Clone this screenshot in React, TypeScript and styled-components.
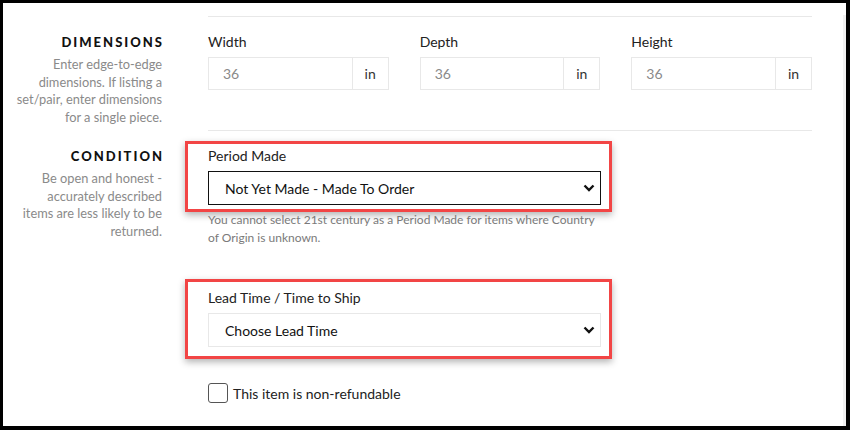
import React, { FC } from "react"
import styled, { createGlobalStyle } from "styled-components"

const GlobalStyle = createGlobalStyle`
  html, body {
    margin: 0;
    padding: 0;
    background: #000;
  }
  body {
    font-family: Lato, "Open Sans", "Liberation Sans", sans-serif;
    color: #222;
  }
`

const Frame = styled.div`
  position: relative;
  margin: 3px 4px 0 3px;
  padding-top: 13px;
  height: 423px;
  box-sizing: border-box;
  background: #fff;
  overflow: hidden;
`

const ScrollStrip = styled.div`
  position: absolute;
  right: 0;
  top: 12px;
  bottom: 0;
  width: 3px;
  background: #f0f0f0;
`

const Section = styled.section`
  display: grid;
  grid-template-columns: 147px 604px;
  column-gap: 46px;
  padding-left: 12px;
`

const Aside = styled.div`
  text-align: right;
`

const Heading = styled.h3<{ $top: number }>`
  margin: ${({ $top }) => $top}px -2px 4px 0;
  font-size: 13px;
  line-height: 20px;
  font-weight: 900;
  letter-spacing: 2px;
  color: #111;
`

const Blurb = styled.p`
  margin: 0 0 0 -8px;
  font-size: 12.8px;
  line-height: 17.6px;
  color: #8a8a8a;
`

const Body = styled.div<{ $pad: string }>`
  border-top: 1px solid #e8e8e8;
  padding: ${({ $pad }) => $pad};
`

const Columns = styled.div`
  display: grid;
  grid-template-columns: repeat(3, 1fr);
  column-gap: 31px;
`

const Label = styled.label`
  display: block;
  font-size: 14px;
  line-height: 20px;
  color: #222;
  margin-bottom: 5px;
`

const InputGroup = styled.div`
  display: flex;
  height: 33px;
  border: 1px solid #e8e8e8;
  box-sizing: border-box;
`

const Value = styled.div`
  flex: 1;
  display: flex;
  align-items: center;
  padding-left: 14px;
  font-size: 14px;
  color: #8a8a8a;
`

const Unit = styled.div`
  width: 35px;
  display: flex;
  align-items: center;
  justify-content: center;
  border-left: 1px solid #e8e8e8;
  font-size: 14px;
  color: #333;
`

const Highlight = styled.div<{ $pad: string; $top: number }>`
  width: 427px;
  box-sizing: border-box;
  margin: ${({ $top }) => $top}px 0 0 -23px;
  padding: ${({ $pad }) => $pad};
  border: 3px solid #f24545;
  box-shadow: 0 3px 7px rgba(0, 0, 0, 0.3);
`

const Select = styled.div<{ $strong?: boolean }>`
  height: 34px;
  width: 393px;
  box-sizing: border-box;
  display: flex;
  align-items: center;
  justify-content: space-between;
  padding: 0 5px 0 16px;
  border: 1px solid ${({ $strong }) => ($strong ? "#111" : "#e8e8e8")};
  font-size: 14px;
  color: #111;
`

const Helper = styled.p`
  margin: -1px 0 0;
  width: 395px;
  font-size: 12px;
  line-height: 18px;
  color: #7a7a7a;
`

const CheckRow = styled.label`
  display: flex;
  align-items: center;
  gap: 5px;
  margin-top: 24px;
  font-size: 14px;
  color: #222;
`

const Box = styled.span`
  width: 20px;
  height: 20px;
  box-sizing: border-box;
  border: 1px solid #555;
  border-radius: 3px;
`

const Chevron: FC = () => (
  <svg width="12" height="8" viewBox="0 0 12 8">
    <path d="M1.5 1.5 L6 6 L10.5 1.5" fill="none" stroke="#111" strokeWidth="2.4" />
  </svg>
)

const dims = ["Width", "Depth", "Height"]

const App: FC = () => (
  <>
    <GlobalStyle />
    <Frame>
      <ScrollStrip />
      <Section>
        <Aside>
          <Heading $top={16}>DIMENSIONS</Heading>
          <Blurb>
            Enter edge-to-edge
            <br />
            dimensions. If listing a
            <br />
            set/pair, enter dimensions
            <br />
            for a single piece.
          </Blurb>
        </Aside>
        <Body $pad="15px 0 40px">
          <Columns>
            {dims.map(d => (
              <div key={d}>
                <Label>{d}</Label>
                <InputGroup>
                  <Value>36</Value>
                  <Unit>in</Unit>
                </InputGroup>
              </div>
            ))}
          </Columns>
        </Body>
      </Section>
      <Section>
        <Aside>
          <Heading $top={16}>CONDITION</Heading>
          <Blurb>
            Be open and honest -
            <br />
            accurately described
            <br />
            items are less likely to be
            <br />
            returned.
          </Blurb>
        </Aside>
        <Body $pad="0">
          <Highlight $top={10} $pad="2px 8px 4px 20px">
            <Label>Period Made</Label>
            <Select $strong>
              Not Yet Made - Made To Order
              <Chevron />
            </Select>
          </Highlight>
          <Helper>
            You cannot select 21st century as a Period Made for items where Country of Origin is unknown.
          </Helper>
          <Highlight $top={32} $pad="6px 8px 9px 20px">
            <Label>Lead Time / Time to Ship</Label>
            <Select>
              Choose Lead Time
              <Chevron />
            </Select>
          </Highlight>
          <CheckRow>
            <Box />
            This item is non-refundable
          </CheckRow>
        </Body>
      </Section>
    </Frame>
  </>
)

export default App
